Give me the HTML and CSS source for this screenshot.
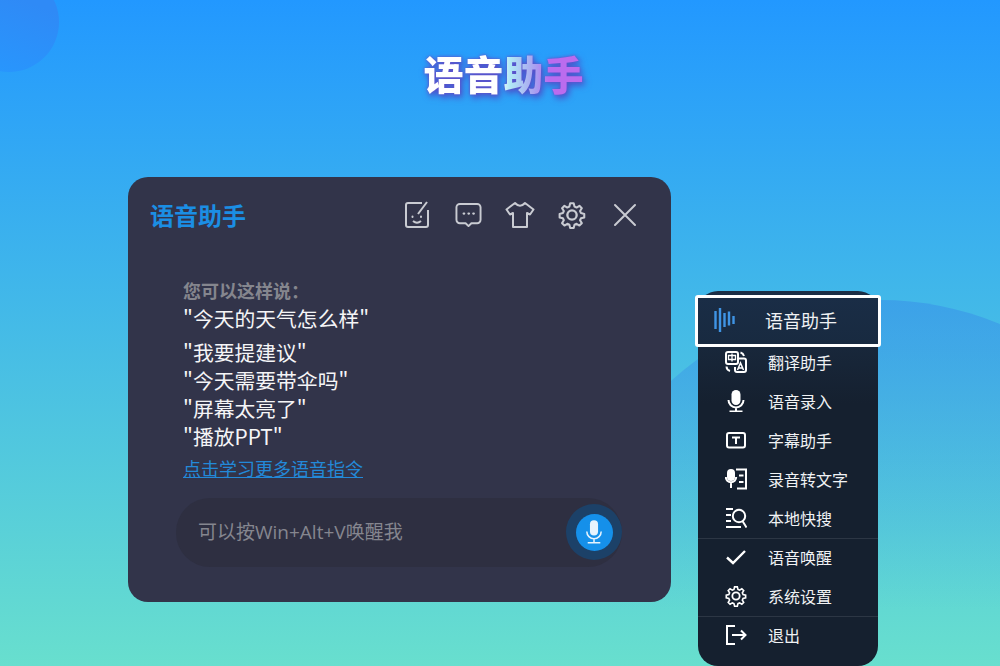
FILE: index.html
```html
<!DOCTYPE html>
<html lang="zh-CN">
<head>
    <meta charset="UTF-8">
    <meta name="viewport" content="width=device-width, initial-scale=1.0">
    <title>语音助手</title>
    <link rel="stylesheet" href="styles.css">
</head>
<body>
    <div class="page">
        <div class="blob blob-left"></div>
        <div class="blob blob-right"></div>

        <div class="page-title"><h1>语音助手</h1></div>

        <div class="stage">
            <div class="assistant-card">
                <div class="card-header">
                    <div class="card-title">语音助手</div>
                    <div class="card-tools">
                        <svg class="tool tool-edit" viewBox="0 0 26 28"><path d="M18 2H4a2 2 0 0 0-2 2v20a2 2 0 0 0 2 2h18a2 2 0 0 0 2-2V9"/><path d="M14 13 23 1"/><path d="M9 20q4 3.500 8 0"/><path d="M8.500 15.500v.5M17 15.500v.5" stroke-linecap="round"/></svg>
                        <svg class="tool tool-chat" viewBox="0 0 28 26"><path d="M5 1.500h18a3.500 3.500 0 0 1 3.500 3.500v13a3.500 3.500 0 0 1-3.500 3.500h-6l-3 3-3-3H5A3.500 3.500 0 0 1 1.500 18V5A3.500 3.500 0 0 1 5 1.500z"/><path d="M9 11.500h.5M14 11.500h.5M19 11.500h.5" stroke-linecap="round" stroke-width="2.400"/></svg>
                        <svg class="tool tool-shirt" viewBox="0 0 30 28"><path d="M10 2 1.500 8.500l3.500 5L8 12v14h14V12l3 1.500 3.500-5L20 2q-5 5.500-10 0z"/></svg>
                        <svg class="tool tool-gear" viewBox="0 0 24 24"><path d="M12 .8h1.800l.8 3.200 2 .9 2.800-1.700 2.300 2.300-1.700 2.800.9 2 3.200.8v3.400l-3.200.8-.9 2 1.700 2.800-2.300 2.300-2.800-1.700-2 .9-.8 3.200h-3.400l-.8-3.200-2-.9-2.800 1.700-2.300-2.300 1.700-2.800-.9-2-3.200-.8v-3.400l3.200-.8.900-2-1.700-2.800 2.300-2.300 2.800 1.700 2-.9.800-3.200z" transform="translate(1.300 1.300) scale(.88)"/><circle cx="12" cy="12" r="4"/></svg>
                        <svg class="tool tool-close" viewBox="0 0 24 24"><path d="M2 2l20 20M22 2 2 22"/></svg>
                    </div>
                </div>

                <div class="tips">
                    <div class="tips-label">您可以这样说：</div>
                    <div class="tip tip-first">"今天的天气怎么样"</div>
                    <div class="tip">"我要提建议"</div>
                    <div class="tip">"今天需要带伞吗"</div>
                    <div class="tip">"屏幕太亮了"</div>
                    <div class="tip">"播放PPT"</div>
                    <a class="tips-link" href="#">点击学习更多语音指令</a>
                </div>

                <div class="voice-input">
                    <span class="voice-hint">可以按Win+Alt+V唤醒我</span>
                    <div class="mic-ring">
                        <div class="mic-button">
                            <svg class="mic-icon" viewBox="0 0 20 26"><rect x="5.500" y="0" width="9" height="17" rx="4.500" fill="#e6f3fd"/><path d="M2 12.500a8 8 0 0 0 16 0M10 20.500v4M3 25h14" fill="none" stroke="#e6f3fd" stroke-width="1.700"/></svg>
                        </div>
                    </div>
                </div>
            </div>

            <div class="side-menu">
                <div class="menu-item menu-active">
                    <svg class="wave-icon" viewBox="0 0 22 24"><path d="M1.500 3v18M6 0v24M10.500 5v14M15 3.500v14M19.500 8v8"/></svg>
                    <span>语音助手</span>
                </div>
                <div class="menu-group">
                    <div class="menu-item">
                        <svg class="menu-icon" viewBox="0 0 22 22"><path d="M3 1h8a2 2 0 0 1 2 2v8a2 2 0 0 1-2 2H3a2 2 0 0 1-2-2V3a2 2 0 0 1 2-2z"/><path d="M3.500 4.500h7v4h-7zM7 2.500v8" stroke-width="1.300"/><path d="M13 7.500h6a2 2 0 0 1 2 2V19a2 2 0 0 1-2 2h-7a2 2 0 0 1-2-2v-3"/><path d="M12.500 19l3-7 3 7M13.500 17h4" stroke-width="1.500"/><path d="M15.500 1.500a5 5 0 0 1 3.500 3.500M1.500 15.500a5 5 0 0 0 3.500 4.500"/></svg>
                        <span>翻译助手</span>
                    </div>
                    <div class="menu-item">
                        <svg class="menu-icon" viewBox="0 0 22 22"><rect x="6.500" y="0" width="9" height="15" rx="4.500" fill="#fff" stroke="none"/><path d="M3.500 10a7.500 7.500 0 0 0 15 0M11 17.500V21M4.500 21.500h13"/></svg>
                        <span>语音录入</span>
                    </div>
                    <div class="menu-item">
                        <svg class="menu-icon" viewBox="0 0 22 22"><rect x="2" y="4" width="18" height="14.500" rx="2"/><path d="M7 8.500h8M11 8.500v6.500" stroke-width="2"/></svg>
                        <span>字幕助手</span>
                    </div>
                    <div class="menu-item">
                        <svg class="menu-icon" viewBox="0 0 22 22"><rect x="2" y="1" width="8" height="12" rx="4" fill="#fff" stroke="none"/><path d="M.8 9a5.200 5.200 0 0 0 10.400 0M6 14v6"/><path d="M11 1.500h10v19h-9M14 7.500h4.500M14 14h4.500"/></svg>
                        <span>录音转文字</span>
                    </div>
                    <div class="menu-item">
                        <svg class="menu-icon" viewBox="0 0 22 22"><path d="M1 2h7M1 8h5M1 14h5M1 20h15"/><circle cx="14" cy="9" r="6.200"/><path d="M17.500 14l4 6.500"/></svg>
                        <span>本地快搜</span>
                    </div>
                </div>
                <div class="menu-group">
                    <div class="menu-item">
                        <svg class="menu-icon" viewBox="0 0 22 22"><path d="M2 11.500 8 17 20 5" stroke-width="2.400"/></svg>
                        <span>语音唤醒</span>
                    </div>
                    <div class="menu-item">
                        <svg class="menu-icon" viewBox="0 0 24 24"><path d="M12 .8h1.800l.8 3.200 2 .9 2.800-1.700 2.300 2.300-1.700 2.800.9 2 3.200.8v3.400l-3.200.8-.9 2 1.700 2.800-2.300 2.300-2.800-1.700-2 .9-.8 3.200h-3.400l-.8-3.200-2-.9-2.800 1.700-2.300-2.300 1.700-2.800-.9-2-3.200-.8v-3.400l3.200-.8.900-2-1.700-2.800 2.300-2.300 2.800 1.700 2-.9.800-3.200z" transform="translate(1.300 1.300) scale(.88)"/><circle cx="12" cy="12" r="4"/></svg>
                        <span>系统设置</span>
                    </div>
                </div>
                <div class="menu-group">
                    <div class="menu-item">
                        <svg class="menu-icon" viewBox="0 0 22 22"><path d="M10 2H2v18h8M7 11h13M16 6.500l4.500 4.500-4.500 4.500"/></svg>
                        <span>退出</span>
                    </div>
                </div>
            </div>
        </div>
    </div>
</body>
</html>
```

FILE: styles.css
```css
* {
    box-sizing: border-box;
}

body {
    margin: 0;
    font-family: "Noto Sans CJK SC", sans-serif;
}

.page {
    position: relative;
    width: 1000px;
    height: 666px;
    overflow: hidden;
    background: linear-gradient(180deg, #2298ff 0%, #68dfce 100%);
}

.blob {
    position: absolute;
    border-radius: 50%;
}

.blob-left {
    left: -41px;
    top: -28px;
    width: 100px;
    height: 100px;
    background: linear-gradient(20deg, #2896fd 10%, #2f8af6 70%);
}

.blob-right {
    left: 570px;
    top: 300px;
    width: 620px;
    height: 620px;
    background: linear-gradient(180deg, rgba(55, 140, 232, 0.5) 0%, rgba(90, 200, 225, 0) 50%);
}

.page-title {
    position: relative;
    height: 177px;
    padding: 48px 0 0 7px;
    display: flex;
    justify-content: center;
    align-items: flex-start;
    filter: drop-shadow(0 0 1.500px #6a4fc8) drop-shadow(2px 3px 3px rgba(80, 60, 190, 0.8));
}

.page-title h1 {
    margin: 0;
    font-size: 40px;
    font-weight: 900;
    line-height: 50px;
    color: transparent;
    background: linear-gradient(90deg, #fff 0%, #fff 46%, #b0e8f6 54%, #a99cf0 70%, #bb6cee 78%);
    -webkit-background-clip: text;
    background-clip: text;
}

.stage {
    position: relative;
    display: flex;
    align-items: flex-start;
    padding-left: 128px;
}

.assistant-card {
    width: 543px;
    height: 425px;
    padding: 0 48px;
    background: #32344a;
    border-radius: 20px;
    color: #fff;
}

.card-header {
    display: flex;
    align-items: center;
    justify-content: space-between;
    height: 74px;
    margin: 0 -14px 0 -26px;
    padding-top: 1px;
}

.card-title {
    color: #1b8ee4;
    font-size: 24px;
    font-weight: bold;
}

.card-tools {
    display: flex;
    align-items: center;
    gap: 25px;
}

.tool {
    fill: none;
    stroke: #c9cbd2;
    stroke-width: 2;
    stroke-linejoin: round;
}

.tool-edit {
    width: 26px;
    height: 28px;
}

.tool-chat {
    width: 27px;
    height: 26px;
}

.tool-shirt {
    width: 30px;
    height: 28px;
    margin-left: -2px;
}

.tool-gear {
    width: 28px;
    height: 28px;
    margin-left: -2px;
}

.tool-close {
    width: 24px;
    height: 24px;
    margin-left: 2px;
    stroke-linecap: round;
}

.tips {
    padding-left: 7px;
    margin-top: 27px;
    height: 220px;
}

.tips-label {
    color: #85868e;
    font-size: 18px;
    font-weight: bold;
    line-height: 24px;
}

.tip {
    font-size: 20.800px;
    line-height: 28px;
    color: #f5f5f7;
}

.tip-first {
    margin-top: 2px;
    margin-bottom: 6px;
}

.tips-link {
    display: block;
    margin-top: 5px;
    color: #2389d8;
    font-size: 18px;
    line-height: 26px;
    text-decoration: underline;
}

.voice-input {
    display: flex;
    align-items: center;
    justify-content: space-between;
    height: 69px;
    width: 446px;
    padding-left: 22px;
    background: #2e2f41;
    border-radius: 34px;
}

.voice-hint {
    margin-top: -3px;
    color: #85868f;
    font-family: "Open Sans", "Noto Sans CJK SC", sans-serif;
    font-size: 19px;
}

.mic-ring {
    display: flex;
    align-items: center;
    justify-content: center;
    width: 56px;
    height: 56px;
    margin-top: -1px;
    border-radius: 50%;
    background: #1c4168;
}

.mic-button {
    display: flex;
    align-items: center;
    justify-content: center;
    width: 37px;
    height: 37px;
    border-radius: 50%;
    background: #1590ea;
}

.mic-icon {
    width: 18px;
    height: 24px;
}

.side-menu {
    display: flex;
    flex-direction: column;
    width: 180px;
    height: 375px;
    margin: 114px 0 0 27px;
    padding-top: 4px;
    background: linear-gradient(180deg, #1b2e46 0%, #15202f 30%);
    border-radius: 20px;
    color: #f0f2f4;
    font-size: 16px;
}

.menu-group {
    padding-bottom: 1px;
    border-bottom: 1px solid #2c3644;
    margin-bottom: -2px;
}

.menu-group:last-child {
    border-bottom: none;
}

.menu-item {
    display: flex;
    align-items: center;
    height: 39px;
    padding-left: 27px;
    gap: 21px;
}

.menu-icon {
    width: 22px;
    height: 22px;
    flex: none;
    fill: none;
    stroke: #fff;
    stroke-width: 2;
}

.menu-active {
    position: relative;
    height: 52px;
    margin: 0 -3px -5px -3px;
    padding: 0 0 2px 16px;
    gap: 29px;
    background: linear-gradient(180deg, #1a2d46, #182a40);
    border: 3px solid #fff;
    border-radius: 3px;
    font-size: 18px;
}

.wave-icon {
    width: 22px;
    height: 24px;
    flex: none;
    fill: none;
    stroke: #3f94e4;
    stroke-width: 2.400;
}
```
